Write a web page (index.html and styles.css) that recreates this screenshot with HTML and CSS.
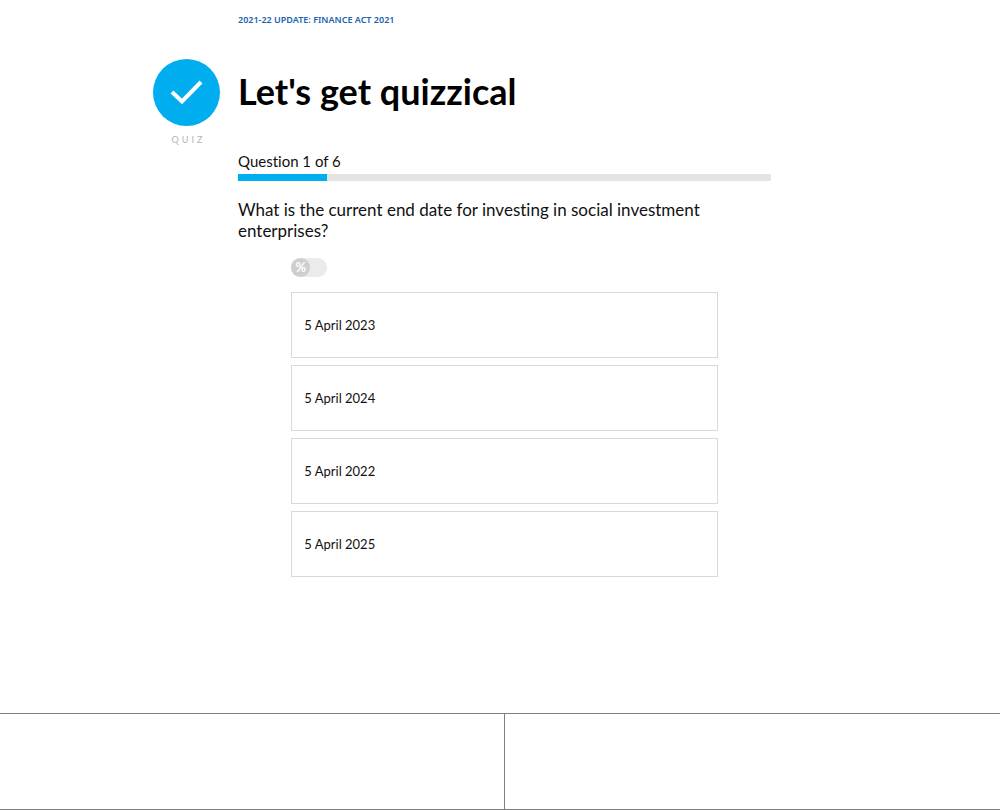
FILE: index.html
```html
<!DOCTYPE html>
<html lang="en">
<head>
<meta charset="UTF-8">
<meta name="viewport" content="width=device-width, initial-scale=1.0">
<title>Let's get quizzical</title>
<link rel="stylesheet" href="styles.css">
</head>
<body>

<main class="page">
    <a href="#" class="update-link">2021-22 UPDATE: FINANCE ACT 2021</a>

    <div class="badge">
        <svg class="badge-icon" viewBox="0 0 68 68" aria-hidden="true">
            <circle cx="33.5" cy="33.5" r="33.5" fill="#00aeef"/>
            <path d="M19 33 L29 42.5 L48 23" fill="none" stroke="#fff" stroke-width="4"/>
        </svg>
        <span class="badge-label">QUIZ</span>
    </div>

    <h1>Let's get quizzical</h1>

    <section class="quiz">
        <label class="count" for="progress">Question 1 of 6</label>
        <progress id="progress" class="progress" value="1" max="6"></progress>

        <h2 class="question">What is the current end date for investing in social investment enterprises?</h2>

        <div class="answers">
            <label class="toggle">
                <input type="checkbox" class="toggle-input" aria-label="Show percentages">
                <span class="toggle-knob">%</span>
            </label>
            <button type="button" class="answer">5 April 2023</button>
            <button type="button" class="answer">5 April 2024</button>
            <button type="button" class="answer">5 April 2022</button>
            <button type="button" class="answer">5 April 2025</button>
        </div>
    </section>
</main>

<footer class="footer">
    <div class="footer-cell"></div>
    <div class="footer-cell"></div>
</footer>

</body>
</html>
```

FILE: styles.css
```css
* {
    box-sizing: border-box;
}

body {
    margin: 0;
    min-height: 100vh;
    display: flex;
    flex-direction: column;
    background-color: #fff;
    color: #111;
    font-family: Lato, "Open Sans", sans-serif;
    font-variant-ligatures: none;
}

.page {
    flex: 1;
    display: grid;
    grid-template-columns: 68px minmax(0, 533px);
    grid-template-rows: auto auto 1fr;
    column-gap: 17px;
    padding: 12px 20px 40px 15.3%;
}

.update-link {
    grid-column: 2;
    justify-self: start;
    margin-bottom: 32px;
    color: #1b62ae;
    font-family: "Noto Sans", sans-serif;
    font-size: 9px;
    font-weight: 600;
    line-height: 15px;
    text-decoration: none;
}

.badge {
    grid-row: 2 / 4;
    display: flex;
    flex-direction: column;
    align-items: center;
}

.badge-icon {
    width: 68px;
    height: 68px;
}

.badge-label {
    margin-top: 6px;
    padding-left: 3px;
    color: #b4b4b4;
    font-size: 9px;
    line-height: 14px;
    letter-spacing: 3px;
}

h1 {
    margin: 0;
    color: #000;
    font-size: 36px;
    line-height: 64px;
}

.quiz {
    grid-column: 2;
    padding-top: 28px;
}

.count {
    display: block;
    font-size: 15px;
    line-height: 20px;
}

.progress {
    display: block;
    width: 100%;
    height: 7px;
    margin-top: 3px;
    border: none;
    background-color: #e4e4e4;
    appearance: none;
    -webkit-appearance: none;
}

.progress::-webkit-progress-bar {
    background-color: #e4e4e4;
}

.progress::-webkit-progress-value {
    background-color: #00aeef;
}

.question {
    margin: 18px 0 17px;
    font-size: 17px;
    font-weight: normal;
    line-height: 21px;
}

.answers {
    display: flex;
    flex-direction: column;
    gap: 7px;
    width: 80%;
    margin: 0 auto;
}

.toggle {
    width: 36px;
    height: 19px;
    margin-bottom: 8px;
    border-radius: 10px;
    background-color: #ebebeb;
    cursor: pointer;
}

.toggle-input {
    position: absolute;
    opacity: 0;
}

.toggle-knob {
    display: block;
    width: 19px;
    height: 19px;
    border-radius: 50%;
    background-color: #cecece;
    color: #fff;
    font-size: 13px;
    font-weight: bold;
    line-height: 19px;
    text-align: center;
    transition: margin-left 0.2s;
}

.toggle-input:checked + .toggle-knob {
    margin-left: 17px;
}

.answer {
    height: 66px;
    padding: 0 12px;
    border: 1px solid #d9d9d9;
    background-color: #fff;
    color: #111;
    font-family: inherit;
    font-size: 13px;
    text-align: left;
    cursor: pointer;
}

.answer:hover {
    border-color: #00aeef;
}

.footer {
    display: grid;
    grid-template-columns: 63fr 62fr;
    height: 97px;
    border-top: 1px solid #808080;
    border-bottom: 1px solid #808080;
}

.footer-cell + .footer-cell {
    border-left: 1px solid #808080;
}
```
